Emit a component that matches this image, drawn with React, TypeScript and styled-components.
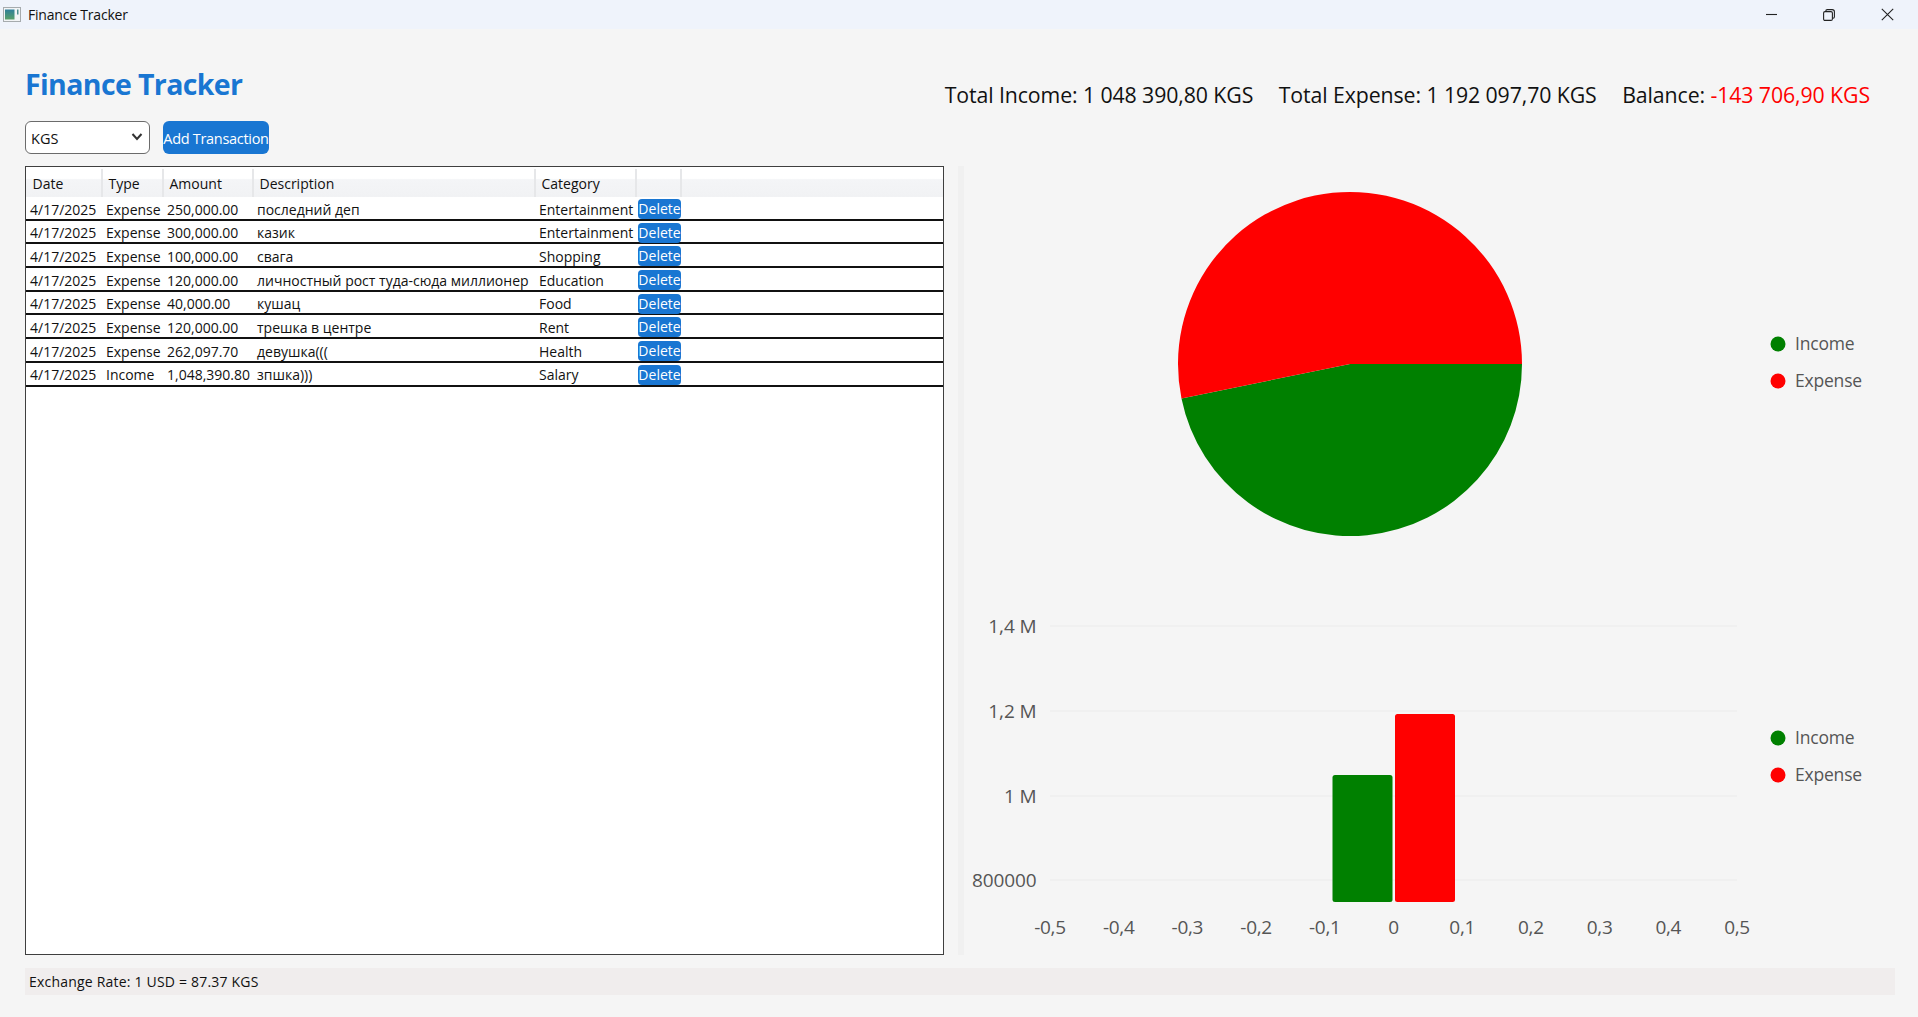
import React from "react";
import styled, { createGlobalStyle } from "styled-components";

const income = 1048390.8;
const expense = 1192097.7;

const rows = [
  ["4/17/2025", "Expense", "250,000.00", "последний деп", "Entertainment"],
  ["4/17/2025", "Expense", "300,000.00", "казик", "Entertainment"],
  ["4/17/2025", "Expense", "100,000.00", "свага", "Shopping"],
  ["4/17/2025", "Expense", "120,000.00", "личностный рост туда-сюда миллионер", "Education"],
  ["4/17/2025", "Expense", "40,000.00", "кушац", "Food"],
  ["4/17/2025", "Expense", "120,000.00", "трешка в центре", "Rent"],
  ["4/17/2025", "Expense", "262,097.70", "девушка(((", "Health"],
  ["4/17/2025", "Income", "1,048,390.80", "зпшка)))", "Salary"],
];

const GlobalStyle = createGlobalStyle`
  html, body { margin: 0; padding: 0; }
  body {
    background: #f5f5f5;
    font-family: "Open Sans", "Noto Sans", sans-serif;
    color: #111;
    overflow: hidden;
  }
`;

const Window = styled.div`
  width: 1918px;
  height: 1017px;
  display: flex;
  flex-direction: column;
`;

const TitleBar = styled.div`
  height: 29px;
  background: #eff3fb;
  display: flex;
  align-items: center;
  padding: 0 1px 0 3px;
  font-size: 14px;
  letter-spacing: -0.2px;
`;

const TitleText = styled.span`
  margin-left: 7px;
  flex: 1;
`;

const WinButton = styled.div`
  width: 59px;
  height: 29px;
  display: flex;
  align-items: center;
  justify-content: center;
`;

const Header = styled.div`
  height: 137px;
  padding: 0 48px 0 25px;
  display: flex;
  justify-content: space-between;
`;

const Brand = styled.div`
  display: flex;
  flex-direction: column;
`;

const AppTitle = styled.h1`
  margin: 35px 0 0;
  height: 57px;
  font-size: 28.5px;
  line-height: 40px;
  font-weight: 700;
  letter-spacing: -0.62px;
  color: #1976d2;
`;

const Controls = styled.div`
  display: flex;
  gap: 13px;
`;

const SelectWrap = styled.div`
  position: relative;
  width: 125px;
  height: 33px;
`;

const CurrencySelect = styled.select`
  appearance: none;
  width: 100%;
  height: 100%;
  box-sizing: border-box;
  background: #fff;
  border: 1.5px solid #6b6b6b;
  border-radius: 6px;
  padding: 2px 0 0 5px;
  font: inherit;
  font-size: 14.5px;
  color: #111;
`;

const Chevron = styled.svg`
  position: absolute;
  right: 7px;
  top: 11px;
  pointer-events: none;
`;

const AddButton = styled.button`
  width: 106px;
  height: 33px;
  padding: 2px 0 0;
  border: 0;
  border-radius: 6px;
  background: #1976d2;
  color: #fff;
  font: inherit;
  font-size: 14.5px;
  letter-spacing: -0.3px;
  white-space: nowrap;
  display: flex;
  justify-content: center;
  align-items: center;
`;

const Summary = styled.div`
  display: flex;
  gap: 25.5px;
  padding-top: 50px;
  font-size: 21.3px;
  line-height: 32px;
  letter-spacing: -0.1px;
`;

const Negative = styled.span`
  color: #ff0000;
`;

const Main = styled.div`
  height: 789px;
  display: grid;
  grid-template-columns: 919px 954px;
  gap: 20px;
  padding-left: 25px;
`;

const TableBox = styled.div`
  box-sizing: border-box;
  height: 789px;
  background: #fff;
  border: 1.5px solid #3f3f3f;
  font-size: 14px;
`;

const columns = "76px 61px 90px 282px 101px 45px 1fr";

const HeadRow = styled.div`
  display: grid;
  grid-template-columns: ${columns};
  height: 30px;
  padding-top: 2px;
  box-sizing: border-box;
  background: linear-gradient(#ffffff 0%, #ffffff 38%, #f4f5f7 42%, #f1f2f4 100%);
`;

const HeadCell = styled.div`
  display: flex;
  align-items: center;
  padding-left: 6.5px;
  border-right: 1px solid #e6e7e9;
  box-shadow: 1px 0 0 #e6e7e9;
  &:last-child { border-right: 0; box-shadow: none; }
`;

const Row = styled.div`
  display: grid;
  grid-template-columns: ${columns};
  box-sizing: border-box;
  height: 23.7px;
  padding-top: 2px;
  border-bottom: 2px solid #111;
  align-items: center;
`;

const Cell = styled.div`
  padding-left: 4px;
  white-space: nowrap;
  overflow: hidden;
`;

const DeleteButton = styled.button`
  margin-left: 2px;
  width: 43px;
  height: 20px;
  padding: 0;
  border: 0;
  border-radius: 4px;
  background: #1976d2;
  color: #fff;
  font: inherit;
  font-size: 14px;
  line-height: 20px;
  overflow: hidden;
  display: flex;
  justify-content: center;
`;

const Charts = styled.div`
  position: relative;
  display: flex;
  flex-direction: column;
`;

const Splitter = styled.div`
  position: absolute;
  left: -6px;
  top: 0;
  bottom: 0;
  width: 6px;
  background: #f0f0f0;
`;

const ChartSvg = styled.svg`
  display: block;
  font-family: "Open Sans", "Noto Sans", sans-serif;
  fill: #555;
`;

const StatusBar = styled.div`
  margin: 13px 23px 0 25px;
  height: 27px;
  padding-left: 4px;
  background: #f0eded;
  display: flex;
  align-items: center;
  font-size: 14px;
  letter-spacing: 0.2px;
`;

function Legend({ y }: { y: number }) {
  return (
    <g fontSize="17.5" letterSpacing="-0.2">
      <circle cx={814} cy={y} r={7.5} fill="#008000" />
      <text x={831} y={y + 6}>Income</text>
      <circle cx={814} cy={y + 37} r={7.5} fill="#ff0000" />
      <text x={831} y={y + 43}>Expense</text>
    </g>
  );
}

function PieChart() {
  const cx = 386;
  const cy = 198;
  const r = 172;
  const angle = (income / (income + expense)) * Math.PI * 2;
  const ex = cx + r * Math.cos(angle);
  const ey = cy + r * Math.sin(angle);
  return (
    <ChartSvg width={954} height={430} viewBox="0 0 954 430">
      <path d={`M${cx} ${cy} L${cx + r} ${cy} A${r} ${r} 0 0 1 ${ex} ${ey} Z`} fill="#008000" />
      <path d={`M${cx} ${cy} L${ex} ${ey} A${r} ${r} 0 1 1 ${cx + r} ${cy} Z`} fill="#ff0000" />
      <Legend y={178} />
    </ChartSvg>
  );
}

function BarChart() {
  // svg starts at y=596 on the page
  const grid = [
    { y: 30, label: "1,4 M" },
    { y: 115, label: "1,2 M" },
    { y: 200, label: "1 M" },
    { y: 284, label: "800000" },
  ];
  const ticks = ["-0,5", "-0,4", "-0,3", "-0,2", "-0,1", "0", "0,1", "0,2", "0,3", "0,4", "0,5"];
  return (
    <ChartSvg width={954} height={359} viewBox="0 0 954 359">
      {grid.map((g) => (
        <g key={g.label}>
          <line x1={86} x2={773} y1={g.y} y2={g.y} stroke="#eeeeee" strokeWidth={1.5} />
          <text x={72.5} y={g.y + 7} textAnchor="end" fontSize="19" letterSpacing="-0.1">{g.label}</text>
        </g>
      ))}
      <rect x={368.5} y={179} width={60} height={127} rx={2.5} fill="#008000" />
      <rect x={431} y={118} width={60} height={188} rx={2.5} fill="#ff0000" />
      {ticks.map((t, i) => (
        <text key={t} x={86 + i * 68.7} y={338} textAnchor="middle" fontSize="19" letterSpacing="-0.3">{t}</text>
      ))}
      <Legend y={142} />
    </ChartSvg>
  );
}

export default function App() {
  return (
    <Window>
      <GlobalStyle />
      <TitleBar>
        <svg width="18" height="15" viewBox="0 0 18 15">
          <defs>
            <linearGradient id="appIcon" x1="0" y1="0" x2="0" y2="1">
              <stop offset="0" stopColor="#2f7f9a" />
              <stop offset="1" stopColor="#58a06a" />
            </linearGradient>
          </defs>
          <rect x="0.5" y="0.5" width="17" height="14" fill="#f2f4f6" stroke="#a6abae" />
          <rect x="2" y="2.5" width="9.5" height="10" fill="url(#appIcon)" />
          <rect x="14" y="2.5" width="1.5" height="5" fill="#4f8f8f" />
        </svg>
        <TitleText>Finance Tracker</TitleText>
        <WinButton>
          <svg width="14" height="11" viewBox="0 0 14 11"><path d="M3 5.5H15" stroke="#222" strokeWidth="1.1" /></svg>
        </WinButton>
        <WinButton>
          <svg width="12" height="12" viewBox="0 0 12 12" fill="none" stroke="#222" strokeWidth="1.1">
            <rect x="0.6" y="2.6" width="8.8" height="8.8" rx="1.4" />
            <path d="M2.8 2.4V2C2.8 1.1 3.5 0.6 4.3 0.6H9.2C10.5 0.6 11.4 1.5 11.4 2.8V7.7C11.4 8.5 10.9 9.1 10 9.2" />
          </svg>
        </WinButton>
        <WinButton>
          <svg width="13" height="13" viewBox="0 0 13 13"><path d="M0.8 0.8L12.2 12.2M12.2 0.8L0.8 12.2" stroke="#222" strokeWidth="1.1" /></svg>
        </WinButton>
      </TitleBar>

      <Header>
        <Brand>
          <AppTitle>Finance Tracker</AppTitle>
          <Controls>
            <SelectWrap>
              <CurrencySelect defaultValue="KGS">
                <option>KGS</option>
                <option>USD</option>
              </CurrencySelect>
              <Chevron width="12" height="10" viewBox="0 0 12 10" fill="none" stroke="#333" strokeWidth="2">
                <path d="M1.5 2L6 7L10.5 2" />
              </Chevron>
            </SelectWrap>
            <AddButton>Add Transaction</AddButton>
          </Controls>
        </Brand>
        <Summary>
          <span>Total Income: 1 048 390,80 KGS</span>
          <span>Total Expense: 1 192 097,70 KGS</span>
          <span>Balance: <Negative>-143 706,90 KGS</Negative></span>
        </Summary>
      </Header>

      <Main>
        <TableBox>
          <HeadRow>
            <HeadCell>Date</HeadCell>
            <HeadCell>Type</HeadCell>
            <HeadCell>Amount</HeadCell>
            <HeadCell>Description</HeadCell>
            <HeadCell>Category</HeadCell>
            <HeadCell />
            <HeadCell />
          </HeadRow>
          {rows.map((r, i) => (
            <Row key={i}>
              {r.map((v, j) => <Cell key={j}>{v}</Cell>)}
              <DeleteButton>Delete</DeleteButton>
            </Row>
          ))}
        </TableBox>
        <Charts>
          <Splitter />
          <PieChart />
          <BarChart />
        </Charts>
      </Main>

      <StatusBar>Exchange Rate: 1 USD = 87.37 KGS</StatusBar>
    </Window>
  );
}
